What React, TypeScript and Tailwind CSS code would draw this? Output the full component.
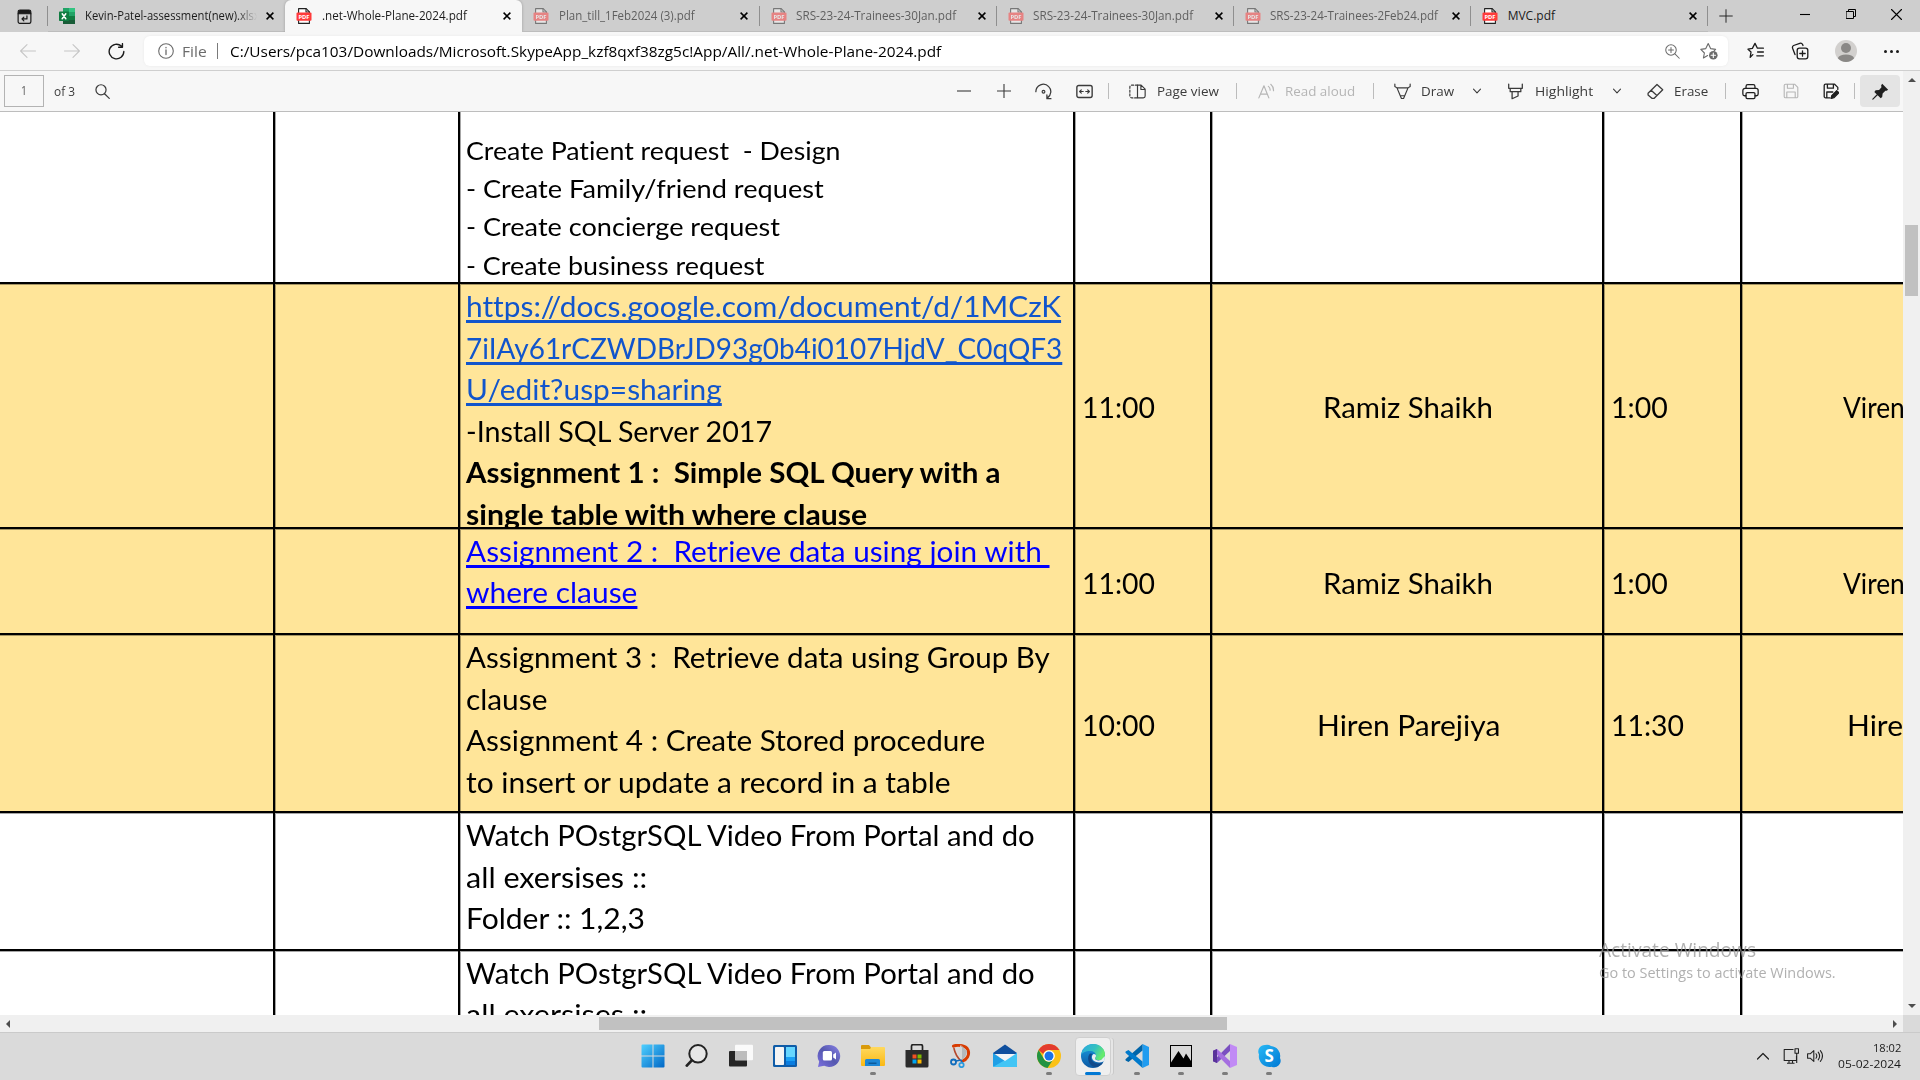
import { useLayoutEffect, useRef, useState, type ReactNode } from "react";

/** Text drawn at a fixed width, condensed or widened horizontally to fill it. */
function Fit({ w, className = "", children }: { w: number; className?: string; children: string }) {
  const ref = useRef<HTMLSpanElement>(null);
  const [scale, setScale] = useState(1);
  useLayoutEffect(() => {
    if (ref.current) setScale(w / ref.current.offsetWidth);
  }, [w, children]);
  return (
    <span className="inline-block shrink-0 whitespace-pre" style={{ width: w }}>
      <span ref={ref} className={`inline-block origin-left whitespace-pre ${className}`} style={{ transform: `scaleX(${scale})` }}>
        {children}
      </span>
    </span>
  );
}

function Icon({ className = "", children, box = "0 0 16 16" }: { className?: string; children: ReactNode; box?: string }) {
  return (
    <svg viewBox={box} className={`block shrink-0 ${className}`} fill="none" stroke="currentColor" strokeWidth="1.1" strokeLinecap="round" strokeLinejoin="round">
      {children}
    </svg>
  );
}

function PdfIcon({ faded }: { faded: boolean }) {
  return (
    <Icon className={faded ? "h-4 w-4 opacity-50" : "h-4 w-4"}>
      <path d="M2.6 .6h7.6l3.2 3.2v11.6H2.6z" fill="#fff" stroke="#222" />
      <path d="M10 .8v3.2h3.2" stroke="#222" />
      <rect x=".5" y="4.6" width="15" height="8.2" rx="1" fill="#ff3b3b" stroke="none" />
      <text x="8" y="10.9" textAnchor="middle" fontSize="5.8" fontWeight="700" fontFamily="Open Sans, sans-serif" fill="#fff" stroke="none">PDF</text>
    </Icon>
  );
}

function ExcelIcon() {
  return (
    <Icon className="h-4 w-4">
      <g stroke="none">
        <path d="M4 0h6v8H4z" fill="#21a366" />
        <path d="M10 0h6v4h-6z" fill="#33c481" />
        <path d="M4 4h6v4H4z" fill="#107c41" />
        <path d="M10 4h6v4h-6z" fill="#21a366" />
        <path d="M4 8h12v8H4z" fill="#185c37" />
        <path d="M10 8h6v4h-6z" fill="#107c41" />
        <rect y="3.5" width="10" height="9.5" rx=".8" fill="#107c41" />
      </g>
      <path d="M3.2 5.8l3.6 5M6.8 5.8l-3.6 5" stroke="#fff" strokeWidth="1.5" />
    </Icon>
  );
}

type TabInfo = { name: string; w: number; kind: "excel" | "pdf"; state: "active" | "ready" | "idle" };
const tabs: TabInfo[] = [
  { name: "Kevin-Patel-assessment(new).xlsx", w: 175, kind: "excel", state: "ready" },
  { name: ".net-Whole-Plane-2024.pdf", w: 145, kind: "pdf", state: "active" },
  { name: "Plan_till_1Feb2024 (3).pdf", w: 136, kind: "pdf", state: "idle" },
  { name: "SRS-23-24-Trainees-30Jan.pdf", w: 160, kind: "pdf", state: "idle" },
  { name: "SRS-23-24-Trainees-30Jan.pdf", w: 160, kind: "pdf", state: "idle" },
  { name: "SRS-23-24-Trainees-2Feb24.pdf", w: 168, kind: "pdf", state: "idle" },
  { name: "MVC.pdf", w: 47, kind: "pdf", state: "ready" },
];

function Tab({ t, i }: { t: TabInfo; i: number }) {
  const active = t.state === "active";
  return (
    <div className={`flex h-8 w-[237.2px] shrink-0 items-center ${active ? "rounded-t-md bg-[#f7f7f7] shadow-[0_0_3px_rgba(0,0,0,.25)]" : "border-b border-[#bdbdbd]"}`}>
      <div className="ml-[11px]">{t.kind === "excel" ? <ExcelIcon /> : <PdfIcon faded={t.state === "idle"} />}</div>
      <div className={`ml-[9.5px] h-[18px] w-[172px] overflow-hidden text-[12px] leading-[18px] ${t.state === "idle" ? "text-[#5f5f5f]" : "text-[#1b1b1b]"} ${t.kind === "excel" ? "[mask-image:linear-gradient(to_right,#000_88%,transparent)]" : ""}`}>
        <Fit w={t.w}>{t.name}</Fit>
      </div>
      <Icon className="ml-[9.5px] h-2 w-2 text-black" box="0 0 8 8">
        <path d="M.6 .6l6.8 6.8M7.4 .6L.6 7.4" strokeWidth="1.5" strokeLinecap="butt" />
      </Icon>
      {i > 1 && <div className="ml-auto h-5 w-px bg-[#8f8f8f]" />}
    </div>
  );
}

function TabStrip() {
  return (
    <div className="flex h-8 w-full items-center bg-[#cecece]">
      <Icon className="ml-[17px] h-[15px] w-[15px] text-[#1b1b1b]">
        <rect x="1.2" y="3.4" width="13.6" height="12" rx="2" strokeWidth="1.3" />
        <path d="M1.2 3.5V3A2 2 0 013.2 1h9.6a2 2 0 012 2v2H1.2z" fill="currentColor" />
        <path d="M10.6 7.4v3.2H5.4M7.3 8.6l-2 2 2 2" strokeWidth="1.3" />
      </Icon>
      <div className="ml-[15px] h-5 w-px bg-[#8f8f8f]" />
      <div className="flex">
        {tabs.map((t, i) => (
          <Tab key={i} t={t} i={i} />
        ))}
      </div>
      <Icon className="ml-[11px] h-[14px] w-[14px] text-[#222]"><path d="M8 .8v14.4M.8 8h14.4" /></Icon>
      <Icon className="mb-1 ml-[67px] h-[10px] w-[10px] text-black" box="0 0 10 10"><path d="M0 5.5h10" strokeLinecap="butt" /></Icon>
      <Icon className="mb-1 ml-[36px] h-[10px] w-[10px] text-black" box="0 0 10 10"><path d="M.5 2.5h7v7h-7zM2.5 2.3V.5h7v7H7.8" strokeWidth="1" /></Icon>
      <Icon className="mb-1 ml-[35px] h-[11px] w-[11px] text-black" box="0 0 11 11"><path d="M.5 .5l10 10M10.5 .5l-10 10" /></Icon>
    </div>
  );
}

function AddressRow() {
  return (
    <div className="flex h-[39px] w-full items-center border-b border-[#cfcfcf] bg-[#f7f7f7]">
      <Icon className="ml-5 h-4 w-4 text-[#c6c6c6]"><path d="M15.5 8H.8M7 1.6L.6 8 7 14.4" /></Icon>
      <Icon className="ml-7 h-4 w-4 text-[#c6c6c6]"><path d="M.5 8h14.700M9 1.6L15.4 8 9 14.4" /></Icon>
      <Icon className="ml-7 h-[17px] w-[17px] text-[#1b1b1b]"><path d="M14.9 8A6.9 6.9 0 1112.6 2.9M13.6 .6v3.4h-3.6" strokeWidth="1.3" /></Icon>
      <div className="ml-[19px] flex h-[30px] w-[1584px] items-center rounded-md bg-white shadow-[0_0_3px_rgba(0,0,0,.06)]">
        <Icon className="ml-[14px] h-4 w-4 text-[#6b6b6b]">
          <circle cx="8" cy="8" r="7.3" />
          <path d="M8 7v4.6M8 4.4v.4" strokeWidth="1.3" />
        </Icon>
        <div className="ml-2 text-[15px] leading-5 text-[#6b6b6b]"><Fit w={25}>File</Fit></div>
        <div className="ml-[10px] h-4 w-px bg-[#7a7a7a]" />
        <div className="ml-3 text-[15px] leading-5 text-black">
          <Fit w={711}>C:/Users/pca103/Downloads/Microsoft.SkypeApp_kzf8qxf38zg5c!App/All/.net-Whole-Plane-2024.pdf</Fit>
        </div>
        <Icon className="ml-auto h-[15px] w-[15px] text-[#6b6b6b]">
          <circle cx="6.4" cy="6.4" r="5.6" />
          <path d="M10.6 10.6l4.6 4.6M6.4 3.8V9M3.8 6.4H9" />
        </Icon>
        <Icon className="ml-5 mr-[10px] h-[18px] w-[18px] text-[#6b6b6b]" box="0 0 18 18">
          <path d="M7.6 13.5L3.4 16l1-5L.8 7.4l5-.8L8.2 1.6l2.4 5 5 .8-1.5 1.4" />
          <circle cx="13.3" cy="13.2" r="4.3" fill="currentColor" stroke="none" />
          <path d="M13.3 11v4.4M11.1 13.2h4.4" stroke="#fff" />
        </Icon>
      </div>
      <Icon className="ml-[19px] h-[18px] w-[18px] text-[#1b1b1b]" box="0 0 18 18">
        <path d="M5.8 12.6L3.2 15.4l.8-5.4L1 7.2l4.4-.8L8 1.4l2.4 4.8h6M10.6 10h5.8M9.8 13.8h6.6" strokeWidth="1.3" />
      </Icon>
      <Icon className="ml-[26px] h-[18px] w-[18px] text-[#1b1b1b]" box="0 0 18 18">
        <rect x="6.2" y="6.2" width="10.6" height="10.6" rx="2.2" strokeWidth="1.3" />
        <path d="M11.5 8.8v5.4M8.8 11.5h5.4M4 12.6L1.6 6.2c-.4-1.3 0-2.2 1-2.7L8.8 1.3c1.200-.4 2.200 0 2.800 1.200l.4 1" strokeWidth="1.3" />
      </Icon>
      <svg viewBox="0 0 22 22" className="ml-[26px] block h-[22px] w-[22px]">
        <circle cx="11" cy="11" r="11" fill="#d2d0ce" />
        <circle cx="11" cy="8" r="5" fill="#8a8886" />
        <path d="M2.8 18.3a8.5 5 0 0116.4 0A11 11 0 0111 22a11 11 0 01-8.2-3.7z" fill="#8a8886" />
      </svg>
      <div className="ml-[27px] flex gap-[3px]">
        <i className="h-[3px] w-[3px] rounded-full bg-[#1b1b1b]" />
        <i className="h-[3px] w-[3px] rounded-full bg-[#1b1b1b]" />
        <i className="h-[3px] w-[3px] rounded-full bg-[#1b1b1b]" />
      </div>
    </div>
  );
}

const Sep = ({ className }: { className: string }) => <div className={`h-4 w-px shrink-0 bg-[#bcbcbc] ${className}`} />;

function PdfToolbar() {
  return (
    <div className="flex h-[41px] w-[1903px] shrink-0 items-center border-b border-[#bdbdbd] bg-[#f7f7f7] text-[13px] leading-5 text-[#3b3b3b]">
      <div className="ml-1 flex h-8 w-10 items-center justify-center border border-[#b3b3b3] text-[12px] text-[#5a5a5a]"><Fit w={6}>1</Fit></div>
      <div className="ml-[10px]"><Fit w={21}>of 3</Fit></div>
      <Icon className="ml-[20px] h-[15px] w-[15px]"><circle cx="6.4" cy="6.2" r="5.4" strokeWidth="1.3" /><path d="M10.2 10.4l5 5" strokeWidth="1.3" /></Icon>
      <Icon className="ml-[847px] h-[14px] w-[14px]" box="0 0 14 14"><path d="M0 7h14" strokeLinecap="butt" /></Icon>
      <Icon className="ml-[26px] h-[14px] w-[14px]" box="0 0 14 14"><path d="M0 7h14M7 0v14" strokeLinecap="butt" /></Icon>
      <Icon className="ml-6 h-[17px] w-[17px]">
        <path d="M.8 8.2A7 7 0 0112.9 3.4c2.900 2.900 2.700 7.600-1.200 10.600M15 14.8h-3.800v-3.600" strokeWidth="1.2" />
        <circle cx="8" cy="8.2" r="1.3" />
      </Icon>
      <Icon className="ml-6 h-[17px] w-[17px]">
        <rect x=".8" y="2.4" width="14.4" height="11.2" rx="1.8" strokeWidth="1.3" />
        <path d="M6.8 8H3.4M9.2 8h3.400M5 6.400L3.400 8 5 9.600M11 6.400L12.600 8 11 9.600" />
      </Icon>
      <Sep className="ml-[15px]" />
      <Icon className="ml-5 h-[17px] w-[17px]">
        <path d="M8 2H2.600A1.800 1.800 0 00.8 3.800v8.400A1.800 1.800 0 002.600 14H8" strokeDasharray="2 1.6" />
        <path d="M8 2h3.400l3.800 3.800v6.400a1.800 1.800 0 01-1.800 1.800H8zM11.200 2.200v3.900h3.800" />
      </Icon>
      <div className="ml-[11px]"><Fit w={62}>Page view</Fit></div>
      <Sep className="ml-[17px]" />
      <Icon className="ml-[21px] h-[17px] w-[17px] text-[#b5b5b5]">
        <path d="M.8 14L5.600 2.600 10.200 14M2.400 10.400h6.200M9.800 3.200c1.200.9 1.700 2 1.600 3.600M12 1.200c1.900 1.600 2.700 3.400 2.600 6" />
      </Icon>
      <div className="ml-[10px] text-[#b5b5b5]"><Fit w={70}>Read aloud</Fit></div>
      <Sep className="ml-[18px]" />
      <Icon className="ml-5 h-[17px] w-[17px]"><path d="M.8 1v2.200l2 1.400h10.400l2-1.400V1M2.800 4.600L7 14.600h2l4.200-10M6.200 12h3.600" /></Icon>
      <div className="ml-[10px]"><Fit w={33}>Draw</Fit></div>
      <Icon className="ml-[19px] h-2 w-2" box="0 0 8 8"><path d="M.5 2.200L4 5.800l3.500-3.600" /></Icon>
      <Icon className="ml-[26px] h-[17px] w-[17px]"><path d="M1.600 1v4h12.800V1M3 5v3.200h10V5M4.800 8.400v6.400l5.600-2.600V8.400" strokeWidth="1.2" /></Icon>
      <div className="ml-[11px]"><Fit w={58}>Highlight</Fit></div>
      <Icon className="ml-[20px] h-2 w-2" box="0 0 8 8"><path d="M.5 2.200L4 5.800l3.500-3.600" /></Icon>
      <Icon className="ml-[26px] h-[17px] w-[17px]"><path d="M1 9.600L9.400 1.400l5.400 5-8 8H4.600L1 11.200zM3.900 6.800l5.400 5" strokeWidth="1.2" /></Icon>
      <div className="ml-[10px]"><Fit w={34}>Erase</Fit></div>
      <Sep className="ml-[17px]" />
      <Icon className="ml-4 h-[17px] w-[17px] text-[#1f1f1f]">
        <path d="M3.800 5V3.200A1.600 1.600 0 015.400 1.600h5.200a1.600 1.600 0 011.600 1.600V5M3.600 12H2.400A1.600 1.600 0 01.8 10.400V7a2 2 0 012-2h10.400a2 2 0 012 2v3.400a1.600 1.600 0 01-1.600 1.600h-1.200" strokeWidth="1.2" />
        <rect x="3.8" y="9" width="8.4" height="5.6" rx="1.2" strokeWidth="1.2" />
      </Icon>
      <Icon className="ml-6 h-4 w-4 text-[#b5b5b5]"><path d="M1.200 2.600A1.400 1.400 0 012.600 1.200h9l3.200 3.200v9a1.400 1.400 0 01-1.400 1.400H2.600a1.400 1.400 0 01-1.400-1.400zM4.400 1.400v3.800h6V1.400M3.800 14.600V9h8.400v5.600" /></Icon>
      <Icon className="ml-6 h-4 w-4 text-[#1f1f1f]">
        <path d="M7 14.800H2.600a1.400 1.400 0 01-1.400-1.400V2.600A1.400 1.400 0 012.600 1.200h9l3.200 3.200v2M4.400 1.400v3.800h6V1.400M3.800 14.600V9h6" strokeWidth="1.3" />
        <path d="M8 15.600l.7-3 5-5 2.200 2.200-5 5z" fill="currentColor" />
      </Icon>
      <Sep className="ml-[15px]" />
      <div className="ml-[5px] flex h-8 w-10 items-center justify-center rounded-sm bg-[#e4e4e4]">
        <Icon className="h-[17px] w-[17px] text-[#1f1f1f]">
          <path d="M9.600 .8l5.600 5.600-1.400 1-1.200-.1-2.600 2.600-.4 3.300-1.400 1.200L2.200 8.400l1.200-1.500 3.300-.4 2.200-2.500-.3-1.800z" fill="currentColor" stroke="none" />
          <path d="M5.200 10.800L.8 15.200" />
        </Icon>
      </div>
    </div>
  );
}

type Line = { text: string; w: number; kind?: "link" | "blue" | "bold"; clip?: boolean };
type Row = { size: string; fill: string; pad: string; small?: boolean; lines: Line[]; cells: [string, number, string, number, string, number, string, number] | null };

const rows: Row[] = [
  {
    size: "h-[172px]", fill: "bg-white", pad: "pt-[18.5px]", small: true, cells: null,
    lines: [
      { text: "Create Patient request  - Design", w: 375 },
      { text: "- Create Family/friend request", w: 358 },
      { text: "- Create concierge request", w: 314 },
      { text: "- Create business request", w: 298 },
    ],
  },
  {
    size: "h-[245px]", fill: "bg-[#ffe599]", pad: "pt-[2px]",
    cells: ["11:00", 73, "Ramiz Shaikh", 170, "1:00", 57, "Viren Shah Patel", 190],
    lines: [
      { text: "https://docs.google.com/document/d/1MCzK", w: 595, kind: "link", clip: true },
      { text: "7iIAy61rCZWDBrJD93g0b4i0107HjdV_C0qQF3", w: 596, kind: "link", clip: true },
      { text: "U/edit?usp=sharing", w: 256, kind: "link" },
      { text: "-Install SQL Server 2017", w: 306 },
      { text: "Assignment 1 :  Simple SQL Query with a", w: 535, kind: "bold" },
      { text: "single table with where clause", w: 401, kind: "bold" },
    ],
  },
  {
    size: "h-[106px]", fill: "bg-[#ffe599]", pad: "pt-[1.5px]",
    cells: ["11:00", 73, "Ramiz Shaikh", 170, "1:00", 57, "Viren Shah Patel", 190],
    lines: [
      { text: "Assignment 2 :  Retrieve data using join with ", w: 583, kind: "blue", clip: true },
      { text: "where clause", w: 171, kind: "blue" },
    ],
  },
  {
    size: "h-[178px]", fill: "bg-[#ffe599]", pad: "pt-[2px]",
    cells: ["10:00", 73, "Hiren Parejiya", 183, "11:30", 73, "Hiren Parejiya", 183],
    lines: [
      { text: "Assignment 3 :  Retrieve data using Group By", w: 584 },
      { text: "clause", w: 81 },
      { text: "Assignment 4 : Create Stored procedure", w: 519 },
      { text: "to insert or update a record in a table", w: 485 },
    ],
  },
  {
    size: "h-[138px]", fill: "bg-white", pad: "pt-[2px]", cells: null,
    lines: [
      { text: "Watch POstgrSQL Video From Portal and do", w: 569 },
      { text: "all exersises ::", w: 181 },
      { text: "Folder :: 1,2,3", w: 179 },
    ],
  },
  {
    size: "h-[84px]", fill: "bg-white", pad: "pt-[1.5px]", cells: null,
    lines: [
      { text: "Watch POstgrSQL Video From Portal and do", w: 569 },
      { text: "all exersises ::", w: 181 },
    ],
  },
];

const lineStyle = {
  link: "text-[#1155cc] underline decoration-[3px] underline-offset-[3px] [text-decoration-skip-ink:none]",
  blue: "text-[#0000ff] underline decoration-[3px] underline-offset-[3px] [text-decoration-skip-ink:none]",
  bold: "font-bold",
};

function Sheet() {
  return (
    <div className="h-[903px] w-[1903px] overflow-hidden bg-white font-['Lato',sans-serif] text-[28px] leading-[41.6px] text-black [font-variant-ligatures:none]">
      {rows.map((r, i) => {
        const c = r.cells;
        const shade = i === 0 ? "shadow-[inset_1px_0_0_rgba(0,0,0,.35)]" : "shadow-[inset_1px_1px_0_rgba(0,0,0,.35)]";
        const edge = "shrink-0 overflow-hidden border-b-2 border-r-2 border-black";
        return (
          <div key={i} className={`flex w-[2136px] ${r.size} ${r.fill}`}>
            <div className={`w-[275px] ${edge} ${i === 0 ? "" : "shadow-[inset_0_1px_0_rgba(0,0,0,.35)]"}`} />
            <div className={`w-[185px] ${edge} ${shade}`} />
            <div className={`w-[615px] pl-[6px] ${edge} ${shade} ${r.pad} ${r.small ? "text-[25.8px] leading-[38.4px]" : ""}`}>
              {r.lines.map((l, k) => (
                <div key={k} className={`${r.small ? "h-[38.4px]" : "h-[41.6px]"} ${l.clip ? "[clip-path:inset(0_-9px_3.6px_-9px)]" : ""}`}>
                  <Fit w={l.w} className={l.kind ? lineStyle[l.kind] : ""}>{l.text}</Fit>
                </div>
              ))}
            </div>
            <div className={`flex w-[137px] items-center pl-[6.5px] pt-[5px] ${edge} ${shade}`}>{c && <Fit w={c[1]}>{c[0]}</Fit>}</div>
            <div className={`flex w-[392px] items-center justify-center pl-[2px] pt-[5px] ${edge} ${shade}`}>{c && <Fit w={c[3]}>{c[2]}</Fit>}</div>
            <div className={`flex w-[138px] items-center pl-[7px] pt-[5px] ${edge} ${shade}`}>{c && <Fit w={c[5]}>{c[4]}</Fit>}</div>
            <div className={`flex w-[394px] items-center justify-center pt-[5px] ${edge} ${shade}`}>{c && <Fit w={c[7]}>{c[6]}</Fit>}</div>
          </div>
        );
      })}
    </div>
  );
}

function Taskbar() {
  const dot = "h-[3px] w-[6px] rounded-full bg-[#7c7c7c]";
  const apps: { draw: ReactNode; mark?: "open" | "active" }[] = [
    {
      draw: (
        <g fill="url(#win)">
          <path d="M.5 1.500a1 1 0 011-1h10v11H.5zM12.500 .5h10a1 1 0 011 1v10h-11zM.5 12.500h11v11h-10a1 1 0 01-1-1zM12.500 12.500h11v10a1 1 0 01-1 1h-10z" />
        </g>
      ),
    },
    {
      draw: (
        <g fill="none" stroke="#222" strokeWidth="2" strokeLinecap="round">
          <circle cx="13" cy="9.800" r="8.700" fill="#e6e6e6" />
          <path d="M6.800 16.400L1.800 21.600" strokeWidth="2.800" />
        </g>
      ),
    },
    {
      draw: (
        <g>
          <rect x="0" y="7" width="18" height="15.500" rx="1" fill="#252525" />
          <rect x="6" y=".8" width="18" height="15.500" rx="1" fill="#fafafa" />
          <path d="M6 7h12v9.300H6z" fill="#bdbdbd" />
        </g>
      ),
    },
    {
      draw: (
        <g>
          <rect x="0" y="1" width="24" height="22" rx="1.500" fill="#0f5ca8" />
          <rect x="2" y="3" width="9" height="18" rx=".8" fill="#f4f4f4" />
          <path d="M13 3h9v10h-9z" fill="#66d6ff" />
          <path d="M13 13h9v4h-9z" fill="#1aa0f5" />
          <path d="M13 17h9v4h-9z" fill="#0a7de0" />
        </g>
      ),
    },
    {
      draw: (
        <g>
          <path d="M12.200 1a11 11 0 11-5 20.800L1 23l1.200-5.400A11 11 0 0112.200 1z" fill="url(#chat)" />
          <rect x="5.800" y="7" width="9.200" height="9.400" rx="1.500" fill="#fff" />
          <path d="M16.200 10.500l2.800-2v7l-2.800-2z" fill="#fff" />
        </g>
      ),
    },
    {
      mark: "open",
      draw: (
        <g>
          <path d="M0 2a1 1 0 011-1h7l2 2.500v3H0z" fill="#d99a0b" />
          <path d="M0 5h9l1.500-2H23a1 1 0 011 1v17a1 1 0 01-1 1H1a1 1 0 01-1-1z" fill="url(#fold)" />
          <path d="M4 22v-5.500A1.500 1.500 0 015.500 15h12a1.500 1.500 0 011.500 1.500V22z" fill="#1c86d6" />
          <path d="M7.500 18.500h8V20h-8z" fill="#0b5a9c" />
        </g>
      ),
    },
    {
      draw: (
        <g>
          <path d="M6.500 6V2.200A1.500 1.500 0 018 .7h8a1.500 1.500 0 011.500 1.500V6" fill="none" stroke="#222" strokeWidth="1.700" />
          <path d="M.5 6h23v16a1.500 1.500 0 01-1.500 1.500H2A1.500 1.500 0 01.5 22z" fill="#2b2b2b" />
          <path d="M7.500 10.500h4v4h-4z" fill="#f25022" />
          <path d="M12.500 10.500h4v4h-4z" fill="#7fba00" />
          <path d="M7.500 15.500h4v4h-4z" fill="#00a4ef" />
          <path d="M12.500 15.500h4v4h-4z" fill="#ffb900" />
        </g>
      ),
    },
    {
      draw: (
        <g fill="none" strokeLinecap="round">
          <path d="M4.500 2.200c3-1.400 12-1.700 14.500 3.800 2 5-1.500 10-5.500 11" stroke="#d83b01" strokeWidth="3" />
          <path d="M5 4.500c1 5 3.500 9 7 12.500" stroke="#b5482c" strokeWidth="1.600" />
          <path d="M12 .5L8.500 8l3.500 8.500 3-6z" fill="#d6d6d6" />
          <path d="M13 2v14c2.500-1.500 4.500-5 5-9z" fill="#b4b8bb" />
          <circle cx="4.500" cy="18" r="2.500" stroke="#0f6cbd" strokeWidth="1.800" />
          <path d="M7 17l5-1 1.500 3" stroke="#0f6cbd" strokeWidth="1.400" />
          <circle cx="12.500" cy="21" r="2.200" stroke="#2a9be0" strokeWidth="1.800" />
        </g>
      ),
    },
    {
      draw: (
        <g>
          <path d="M0 9L12 .5 24 9v4H0z" fill="#0f4f9e" />
          <path d="M0 9l12 7.500L24 9v13a1 1 0 01-1 1H1a1 1 0 01-1-1z" fill="#1f9fe6" />
          <path d="M0 23L24 9v13a1 1 0 01-1 1z" fill="#42c5f5" />
          <path d="M1.500 10h21L12 17z" fill="#f2f4f6" />
        </g>
      ),
    },
    {
      mark: "open",
      draw: (
        <g>
          <circle cx="12" cy="12" r="12" fill="#fbc116" />
          <path d="M12 0a12 12 0 0110.400 6H12a6 6 0 00-5.700 4L1.600 6A12 12 0 0112 0z" fill="#e33b2e" />
          <path d="M1.600 6A12 12 0 0010.500 23.900L16.500 15A5.500 5.500 0 017 15z" fill="#229342" />
          <circle cx="12" cy="12" r="5.800" fill="#fff" />
          <circle cx="12" cy="12" r="4.500" fill="#1a73e8" />
        </g>
      ),
    },
    {
      mark: "active",
      draw: (
        <g>
          <circle cx="12" cy="12" r="12" fill="url(#edgeB)" />
          <path d="M.2 11C1 4.500 6 0 12.200 0 19 0 24 5 24 10.200c0 3.600-2.700 5.800-5.900 5.800-3 0-4.100-1-4.100-1.800 0-.7 1-1 1-2.700C15 9 12.400 7 9 7 4.500 7 1 9 .2 11z" fill="url(#edgeA)" />
          <path d="M9 9.500c-3.500 3.500-2 11 3.700 13.300 3 1 7.300-.8 9.300-4.300-5 2.500-11.500.5-12-4.500-.1-2 .8-3.500 1.700-4.300z" fill="#114a8b" />
          <path d="M12.500 10c-2 1.500-2.300 4.500.3 6.800 2.600 2 6.700 2.200 9.700.7.700-.2 1.200.2 1 .9L24 12l-4 4c-3.500 1-6 0-6-1.800 0-.7 1-1 1-2.500 0-1-1.200-2-2.500-1.700z" fill="#e8eef2" />
        </g>
      ),
    },
    {
      mark: "open",
      draw: (
        <g>
          <path d="M17.500 0L24 3v18l-6.500 3z" fill="#1f9cf0" />
          <path d="M17.500 0v6.500L3.500 18 1 16.800c-.8-.7-.8-1.300 0-2z" fill="#0065a9" />
          <path d="M17.500 24v-6.500L3.500 6 1 7.200c-.8.7-.8 1.300 0 2z" fill="#007acc" />
        </g>
      ),
    },
    {
      mark: "open",
      draw: (
        <g>
          <rect x="1.500" y="1.500" width="21" height="21" fill="#d9d9d9" stroke="#000" />
          <path d="M2 18.500L9.500 7l5 7.500 2.500-5 5 7.500v5.500H2z" fill="#000" />
        </g>
      ),
    },
    {
      mark: "open",
      draw: (
        <g>
          <path d="M17 0l7 3v18l-7 3z" fill="#c18af5" />
          <path d="M17 0v7L4 19l-4-1.800L17 0z" fill="#7a4fc0" />
          <path d="M17 24v-7L4 5 0 6.800 17 24z" fill="#a56fe0" />
          <path d="M0 6.800L4 5v14l-4-1.800z" fill="#593399" />
        </g>
      ),
    },
    {
      mark: "open",
      draw: (
        <g>
          <path d="M8 1a7 7 0 016 1 10 10 0 019 12 6.500 6.500 0 01-8.500 8.700A10.500 10.500 0 012 10.500 6.500 6.500 0 018 1z" fill="url(#sky)" />
          <text x="12.200" y="18.200" textAnchor="middle" fontSize="17" fontWeight="700" fontFamily="Open Sans, sans-serif" fill="#fff">S</text>
        </g>
      ),
    },
  ];
  return (
    <div className="flex h-12 w-full border-t border-[#cacaca] bg-[#dadada]">
      <svg className="h-0 w-0">
        <defs>
          <linearGradient id="win" x1="0" y1="0" x2="1" y2="1"><stop offset="0" stopColor="#4fd0ff" /><stop offset="1" stopColor="#0067c6" /></linearGradient>
          <linearGradient id="chat" x1="0" y1="1" x2="1" y2="0"><stop offset="0" stopColor="#7b6fe0" /><stop offset=".5" stopColor="#5558af" /><stop offset="1" stopColor="#8b83e8" /></linearGradient>
          <linearGradient id="fold" x1="0" y1="0" x2="0" y2="1"><stop offset="0" stopColor="#ffd95e" /><stop offset="1" stopColor="#fab813" /></linearGradient>
          <linearGradient id="edgeA" x1="0" y1="0" x2="1" y2=".4"><stop offset="0" stopColor="#2aa8e0" /><stop offset=".6" stopColor="#35c1c0" /><stop offset="1" stopColor="#66eb6e" /></linearGradient>
          <linearGradient id="edgeB" x1="0" y1="0" x2="0" y2="1"><stop offset="0" stopColor="#1b9de2" /><stop offset="1" stopColor="#0c59a4" /></linearGradient>
          <linearGradient id="sky" x1="0" y1="0" x2="1" y2="1"><stop offset="0" stopColor="#28b9f5" /><stop offset="1" stopColor="#0078d4" /></linearGradient>
        </defs>
      </svg>
      <div className="ml-[631px] flex">
        {apps.map((a, i) => (
          <div key={i} className="flex h-[47px] w-11 flex-col items-center pt-[4px]">
            <div className={`flex h-[39px] flex-col items-center ${a.mark === "active" ? "w-[36px] rounded border border-[#cfcfcf] bg-[#efefef] pt-[6px] shadow-[3px_0_0_-1px_#e6e6e6,4px_0_0_-1px_#c9c9c9]" : "w-9 pt-[7px]"}`}>
              <svg viewBox="0 0 24 24" className="block h-6 w-6 shrink-0">{a.draw}</svg>
              <div className="mt-[4px] flex h-[3px]">
                {a.mark === "open" && <div className={dot} />}
                {a.mark === "active" && <div className="h-[3px] w-4 rounded-full bg-[#0078d4]" />}
              </div>
            </div>
          </div>
        ))}
      </div>
      <Icon className="ml-auto mt-[17px] h-3 w-3 text-[#222]" box="0 0 12 12"><path d="M.5 9L6 3.500 11.500 9" strokeWidth="1.300" /></Icon>
      <Icon className="ml-[14px] mt-[15px] h-4 w-4 text-[#222]">
        <path d="M10.500 1.500H1.200v11h12.300V8M4 15.300h7.500M6 12.500v2.800M9.500 12.500v2.800M12 .8h3.500v4.400H12zM13.700 5.200V15" strokeLinecap="butt" />
      </Icon>
      <Icon className="ml-[8px] mt-[15px] h-4 w-4 text-[#222]">
        <path d="M.6 5.800h2.600L6.800 2.600v10.800L3.200 10.200H.6zM9 5.800c1 1.400 1 3 0 4.400M11.200 4.200c1.800 2.400 1.800 5.200 0 7.600M13.400 2.600c2.600 3.400 2.600 7.400 0 10.800" />
      </Icon>
      <div className="ml-[15px] mr-[19px] mt-[7px] flex w-[63px] flex-col items-end text-[11.5px] leading-4 text-[#1b1b1b]">
        <Fit w={28}>18:02</Fit>
        <Fit w={63}>05-02-2024</Fit>
      </div>
    </div>
  );
}

const Arrow = ({ d }: { d: string }) => (
  <svg viewBox="0 0 8 8" className="block h-2 w-2 shrink-0"><path d={d} fill="#4d4d4d" /></svg>
);

export default function App() {
  return (
    <div className="relative flex h-[1080px] w-[1920px] flex-col overflow-hidden bg-white font-['Open_Sans',sans-serif]">
      <TabStrip />
      <AddressRow />
      <div className="flex h-[944px] w-full">
        <div className="flex w-[1903px] shrink-0 flex-col">
          <PdfToolbar />
          <Sheet />
        </div>
        <div className="flex w-[17px] flex-col items-center bg-[#f0f0f0] py-[5px]">
          <Arrow d="M0 6l4-4 4 4z" />
          <div className="mt-[141px] h-[71px] w-[13px] bg-[#c1c1c1]" />
          <div className="mt-auto"><Arrow d="M0 2l4 4 4-4z" /></div>
        </div>
      </div>
      <div className="flex h-[17px] w-full">
        <div className="flex w-[1903px] items-center bg-[#f0f0f0] px-1">
          <Arrow d="M6 0L2 4l4 4z" />
          <div className="ml-[587px] h-[13px] w-[628px] bg-[#c1c1c1]" />
          <div className="ml-auto"><Arrow d="M2 0l4 4-4 4z" /></div>
        </div>
        <div className="w-[17px] bg-[#dadada]" />
      </div>
      <Taskbar />
      <div className="absolute left-[1599px] top-[936px] flex flex-col text-[rgba(150,150,150,.75)]">
        <div className="h-[27px] text-[19.5px] leading-[27px]"><Fit w={157}>Activate Windows</Fit></div>
        <div className="h-[20px] text-[14.5px] leading-[20px]"><Fit w={237}>Go to Settings to activate Windows.</Fit></div>
      </div>
    </div>
  );
}
